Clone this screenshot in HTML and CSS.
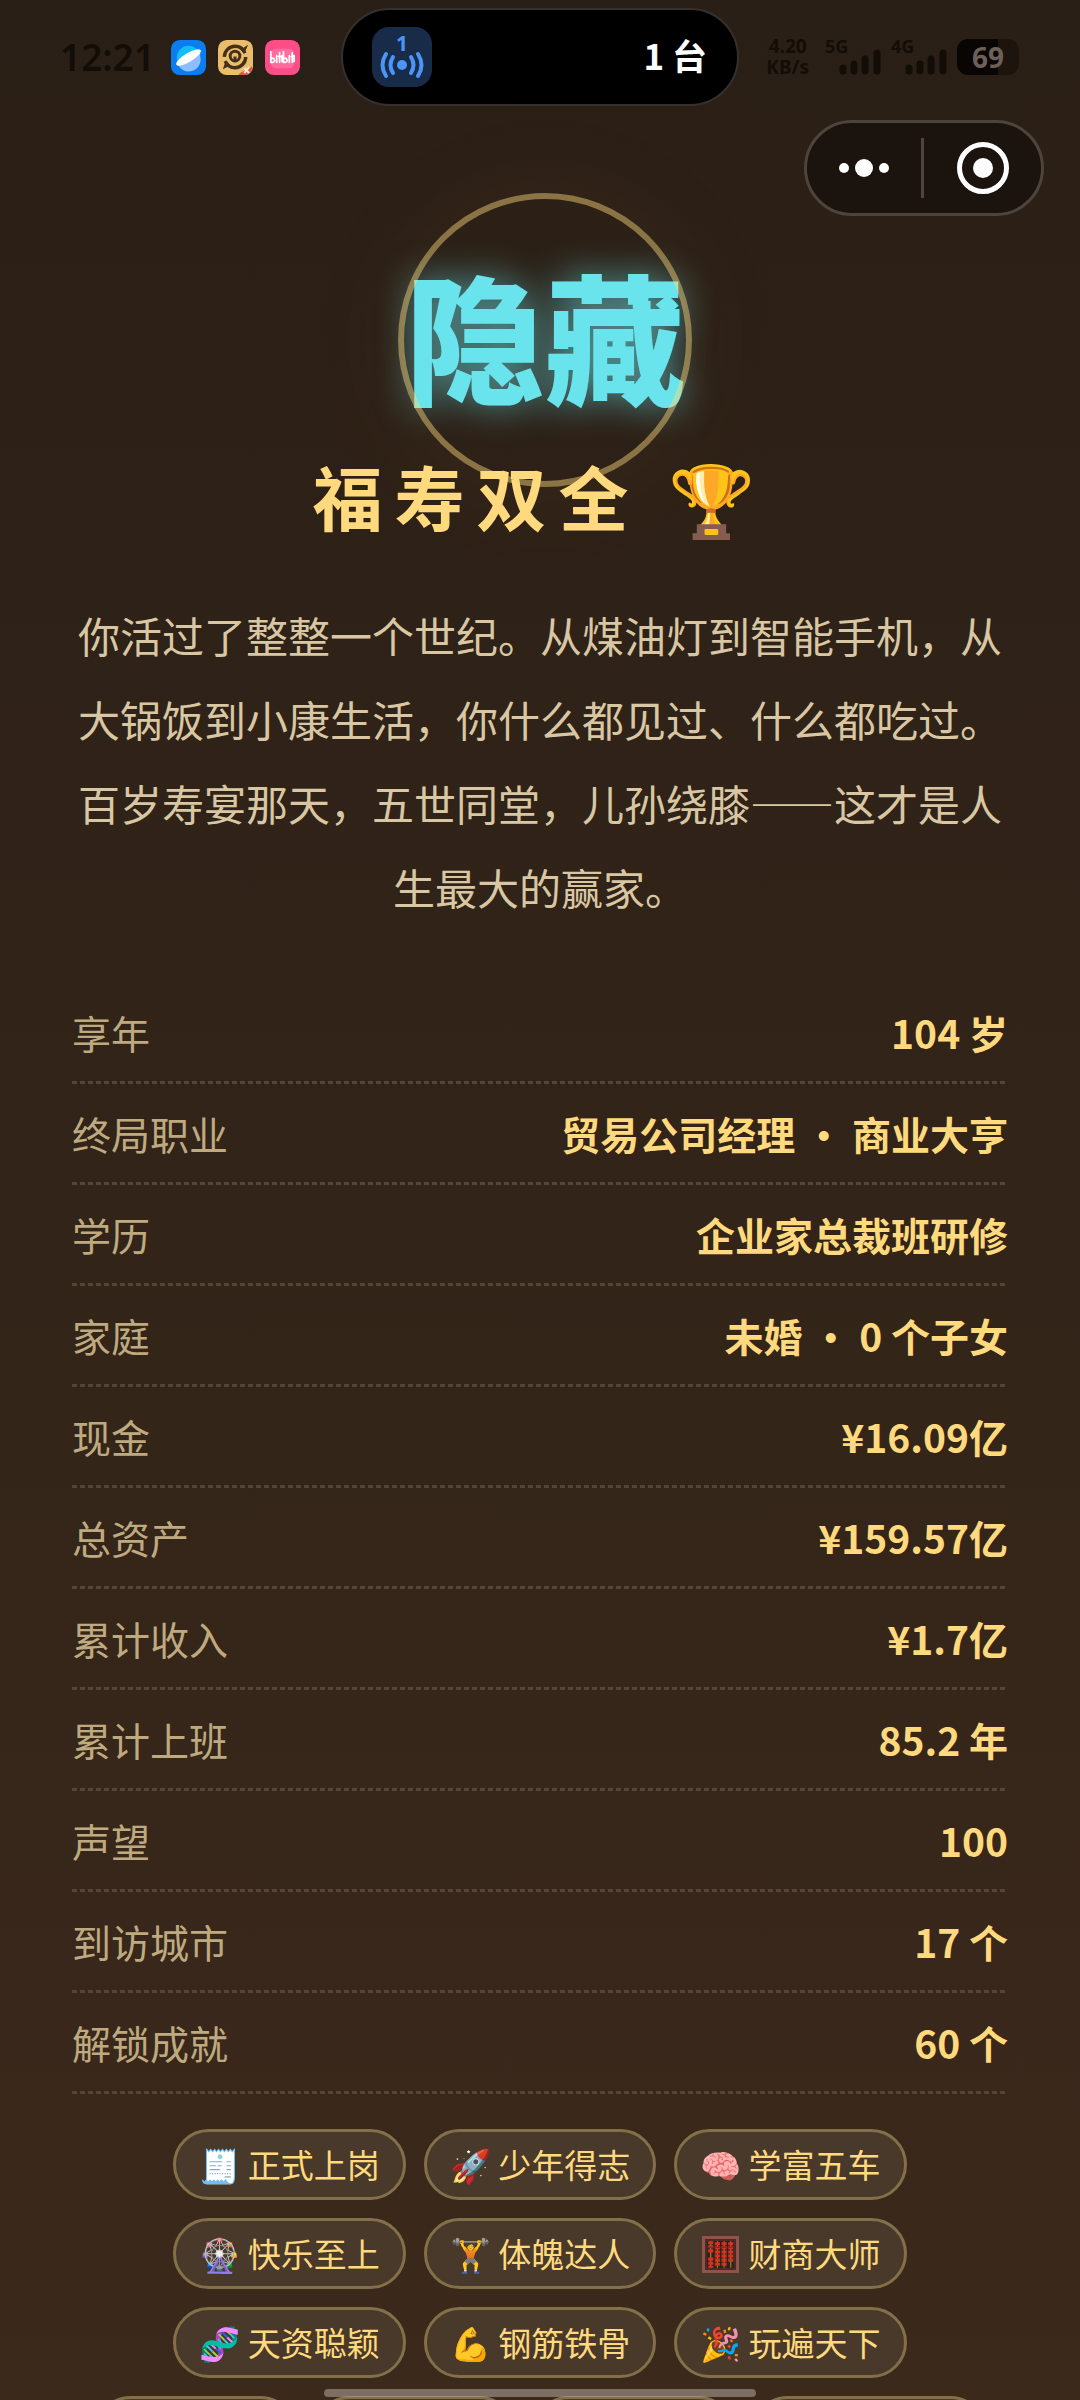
FILE: index.html
```
<!DOCTYPE html>
<html lang="zh-CN">
<head>
    <meta charset="UTF-8">
    <meta name="viewport" content="width=device-width, initial-scale=1.0">
    <title>福寿双全</title>
    <link rel="stylesheet" href="styles.css">
</head>
<body>
    <div class="page">
        <header class="status-bar">
            <div class="status-left">
                <span class="clock">12:21</span>
                <svg class="app-icon" viewBox="0 0 36 36">
                    <rect width="36" height="36" rx="9" fill="#0a7df0"/>
                    <circle cx="18" cy="18" r="12" fill="#15bdf8"/>
                    <path d="M6.500 23.500A12 12 0 0 0 30 17L30 11Z" fill="#8dbcff"/>
                    <ellipse cx="18" cy="18" rx="14.500" ry="4.600" transform="rotate(-31 18 18)" fill="#fff"/>
                </svg>
                <svg class="app-icon" viewBox="0 0 36 36">
                    <rect width="36" height="36" rx="9" fill="#e9bd6c"/>
                    <circle cx="17.500" cy="17.500" r="11" fill="none" stroke="#44301a" stroke-width="3.500" stroke-dasharray="30 4.500"/>
                    <path d="M31 5L23 10L27 14ZM5 30L8 21L13 26Z" fill="#44301a"/>
                    <circle cx="17.500" cy="16.500" r="5" fill="none" stroke="#44301a" stroke-width="3"/>
                    <path d="M16 17H19V23H16Z" fill="#44301a"/>
                    <path d="M21 36C24 31 29 33 35 27V29Q35 36 27 36Z" fill="#e4533f"/>
                    <path d="M27 29L32 34M32 28L27 34" stroke="#ffe8dc" stroke-width="2"/>
                </svg>
                <svg class="app-icon" viewBox="0 0 36 36">
                    <rect width="36" height="36" rx="9" fill="#fb4d86"/>
                    <rect x="6" y="9" width="24" height="20" rx="5" fill="#ff6b9c"/>
                    <g fill="none" stroke="#fff" stroke-width="1.800" stroke-linecap="round">
                        <path d="M6 12V23H8Q11 22 9 19H7M12 16V23M15 13V23M14 17H16M17.500 16V22M19 12V23H21Q24 22 22 19H20M25 16V23M28 13V23M27 17H29M30 16V22"/>
                    </g>
                </svg>
            </div>
            <div class="island">
                <svg class="hotspot" viewBox="0 0 60 60">
                    <rect width="60" height="60" rx="17" fill="#182c4a"/>
                    <text x="30" y="24" class="hotspot-count">1</text>
                    <circle cx="30" cy="38" r="5" fill="#4c94f5"/>
                    <g fill="none" stroke="#4c94f5" stroke-width="4" stroke-linecap="round">
                        <path d="M21 30Q16 38 21 46M14 27Q7 38 14 49M39 30Q44 38 39 46M46 27Q53 38 46 49"/>
                    </g>
                </svg>
                <span>1 台</span>
            </div>
            <div class="status-right">
                <div class="net-speed"><span>4.20</span><span>KB/s</span></div>
                <div class="signal">
                    <span>5G</span>
                    <svg viewBox="0 0 42 26"><path d="M4 19V22M15 15V22M26 10V22M38 4V22"/></svg>
                </div>
                <div class="signal">
                    <span>4G</span>
                    <svg viewBox="0 0 42 26"><path d="M4 19V22M15 15V22M26 10V22M38 4V22"/></svg>
                </div>
                <div class="battery">69</div>
            </div>
        </header>

        <div class="capsule">
            <button type="button" aria-label="更多">
                <svg width="50" height="18" viewBox="0 0 50 18" fill="#fff"><circle cx="5" cy="9" r="5"/><circle cx="25" cy="9" r="9"/><circle cx="45" cy="9" r="5"/></svg>
            </button>
            <button type="button" aria-label="关闭">
                <svg width="52" height="52" viewBox="0 0 52 52"><circle cx="26" cy="26" r="23.500" fill="none" stroke="#fff" stroke-width="5"/><circle cx="26" cy="26" r="10" fill="#fff"/></svg>
            </button>
        </div>

        <main class="result">
            <div class="rank">隐藏</div>
            <h1>福寿双全 🏆</h1>
            <p class="story">你活过了整整一个世纪。从煤油灯到智能手机，从大锅饭到小康生活，你什么都见过、什么都吃过。百岁寿宴那天，五世同堂，儿孙绕膝——这才是人生最大的赢家。</p>

            <table class="stats">
                <tbody>
                    <tr><th scope="row">享年</th><td>104 岁</td></tr>
                    <tr><th scope="row">终局职业</th><td>贸易公司经理 · 商业大亨</td></tr>
                    <tr><th scope="row">学历</th><td>企业家总裁班研修</td></tr>
                    <tr><th scope="row">家庭</th><td>未婚 · 0 个子女</td></tr>
                    <tr><th scope="row">现金</th><td>¥16.09亿</td></tr>
                    <tr><th scope="row">总资产</th><td>¥159.57亿</td></tr>
                    <tr><th scope="row">累计收入</th><td>¥1.7亿</td></tr>
                    <tr><th scope="row">累计上班</th><td>85.2 年</td></tr>
                    <tr><th scope="row">声望</th><td>100</td></tr>
                    <tr><th scope="row">到访城市</th><td>17 个</td></tr>
                    <tr><th scope="row">解锁成就</th><td>60 个</td></tr>
                </tbody>
            </table>

            <div class="badges">
                <span class="badge">🧾 正式上岗</span>
                <span class="badge">🚀 少年得志</span>
                <span class="badge">🧠 学富五车</span>
                <span class="badge">🎡 快乐至上</span>
                <span class="badge">🏋️ 体魄达人</span>
                <span class="badge">
                    <svg class="abacus" viewBox="0 0 36 36">
                        <rect x="1.500" y="1.500" width="33" height="33" fill="#33201b" stroke="#8d5549" stroke-width="3"/>
                        <rect x="4" y="4" width="28" height="28" fill="none" stroke="#5e342c" stroke-width="1"/>
                        <path d="M8.500 5V31M15 5V31M21.500 5V31M28 5V31" stroke="#b58a3a" stroke-width="1"/>
                        <g stroke="#d6301f" stroke-width="5" stroke-dasharray="3 1">
                            <path d="M8.500 5V17M8.500 21V31M15 6V30M21.500 6V30M28 6V26"/>
                        </g>
                        <path d="M5 11H31" stroke="#5e342c" stroke-width="1"/>
                    </svg>
                    财商大师
                </span>
                <span class="badge">🧬 天资聪颖</span>
                <span class="badge">💪 钢筋铁骨</span>
                <span class="badge">🎉 玩遍天下</span>
            </div>
            <div class="badges">
                <span class="badge badge-short"></span>
                <span class="badge badge-short"></span>
                <span class="badge badge-short"></span>
                <span class="badge badge-long"></span>
            </div>
        </main>
        <div class="home-bar"></div>
    </div>
</body>
</html>
```
FILE: styles.css
```
* {
    box-sizing: border-box;
}
body {
    margin: 0;
    font-family: "Noto Sans CJK SC", "Noto Sans", sans-serif;
    color: #ffd97d;
}
.page {
    position: relative;
    height: 100vh;
    overflow: hidden;
    background: linear-gradient(#2a1f16, #3b291b);
}

/* status bar */
.status-bar {
    display: grid;
    grid-template-columns: 1fr 398px 1fr;
    align-items: center;
    padding-top: 8px;
    font-family: "Noto Sans", "Noto Sans CJK SC", sans-serif;
    color: #130d08;
}
.status-left {
    display: flex;
    align-items: center;
    gap: 12px;
    padding-left: 60px;
}
.clock {
    margin-right: 4px;
    font-size: 37px;
    font-weight: 600;
    line-height: 48px;
}
.app-icon {
    width: 35px;
    height: 35px;
    flex: none;
}
.island {
    display: flex;
    align-items: center;
    justify-content: space-between;
    height: 98px;
    padding: 0 30px 0 29px;
    border: 2px solid #35302b;
    border-radius: 49px;
    background: #000;
    color: #fff;
    font-family: "Noto Sans CJK SC", sans-serif;
    font-size: 35px;
    font-weight: 700;
    line-height: 90px;
}
.hotspot {
    width: 60px;
    height: 60px;
}
.island span {
    padding-bottom: 4px;
}
.hotspot-count {
    font-family: "Noto Sans", sans-serif;
    font-size: 21px;
    font-weight: 700;
    text-anchor: middle;
    fill: #4c94f5;
}
.status-right {
    display: flex;
    align-items: center;
    justify-content: flex-end;
    gap: 10px;
    padding-right: 61px;
}
.net-speed {
    display: flex;
    flex-direction: column;
    align-items: center;
    margin-right: 6px;
    font-size: 19px;
    font-weight: 700;
    line-height: 21px;
}
.signal {
    position: relative;
    width: 56px;
    height: 36px;
    font-size: 18px;
    font-weight: 700;
    line-height: 14px;
}
.signal svg {
    position: absolute;
    right: 0;
    bottom: 0;
    width: 42px;
    height: 26px;
    fill: none;
    stroke: currentColor;
    stroke-width: 7px;
    stroke-linecap: round;
}
.battery {
    width: 62px;
    height: 36px;
    border-radius: 11px;
    background: linear-gradient(90deg, #080503 66%, #1d140e 66%);
    color: #6c6058;
    font-size: 28px;
    font-weight: 700;
    line-height: 36px;
    text-align: center;
}

/* mini program capsule */
.capsule {
    display: flex;
    width: 240px;
    height: 96px;
    margin: 14px 36px 0 auto;
    border: 3px solid #4e443c;
    border-radius: 48px;
    background: #1b130e;
}
.capsule button {
    display: flex;
    flex: 0 0 114px;
    align-items: center;
    justify-content: center;
    margin: 15px 0;
    padding: 0;
    border: 0;
    background: none;
}
.capsule button + button {
    flex: 1;
    border-left: 3px solid #4e443c;
}

/* result */
.result {
    padding: 0 72px;
}
.rank {
    position: relative;
    margin-top: 24px;
    padding: 0 0 14px 10px;
    color: #69e3ec;
    font-size: 140px;
    font-weight: 900;
    line-height: 186px;
    text-align: center;
    text-shadow: 0 0 36px rgba(105, 227, 236, 0.6);
}
.rank::after {
    content: "";
    position: absolute;
    top: 50%;
    left: 50%;
    box-sizing: border-box;
    width: 294px;
    height: 294px;
    margin-left: 5px;
    border: 6px solid rgba(255, 217, 125, 0.45);
    border-radius: 50%;
    box-shadow: 0 0 120px rgba(255, 180, 90, 0.05);
    transform: translate(-50%, -50%);
}
h1 {
    position: relative;
    margin: 4px 0 0;
    font-size: 70px;
    font-weight: 700;
    letter-spacing: 12px;
    line-height: 104px;
    text-align: center;
}
.story {
    margin: 45px 0 54px;
    color: #d9c7a3;
    font-size: 42px;
    line-height: 84px;
    text-align: center;
}
.stats {
    display: block;
}
.stats tbody {
    display: block;
}
.stats tr {
    display: flex;
    justify-content: space-between;
    padding: 20px 0 23px;
    background: repeating-linear-gradient(90deg, #544637 0 5px, transparent 5px 8px) bottom / 100% 3px no-repeat;
    font-size: 39px;
    line-height: 58px;
}
.stats th {
    padding: 0;
    color: #bfaa80;
    font-weight: 400;
}
.stats td {
    padding: 0;
    font-weight: 700;
}

/* achievements */
.badges {
    display: flex;
    flex-wrap: wrap;
    justify-content: center;
    gap: 18px;
    margin: 35px 72px 0;
}
.badges + .badges {
    margin: 18px 0 0;
}
.badge {
    height: 71px;
    padding: 0 23px;
    border: 3px solid #837049;
    border-radius: 36px;
    background: #49392b;
    font-size: 33px;
    line-height: 65px;
    white-space: nowrap;
}
.badge-short {
    width: 201px;
}
.badge-long {
    width: 234px;
}
.abacus {
    width: 37px;
    height: 37px;
    margin: 0 2px;
    vertical-align: -6px;
}
.home-bar {
    position: absolute;
    bottom: 3px;
    left: 50%;
    width: 40%;
    height: 8px;
    border-radius: 4px;
    background: rgba(190, 180, 170, 0.5);
    transform: translateX(-50%);
}
```
